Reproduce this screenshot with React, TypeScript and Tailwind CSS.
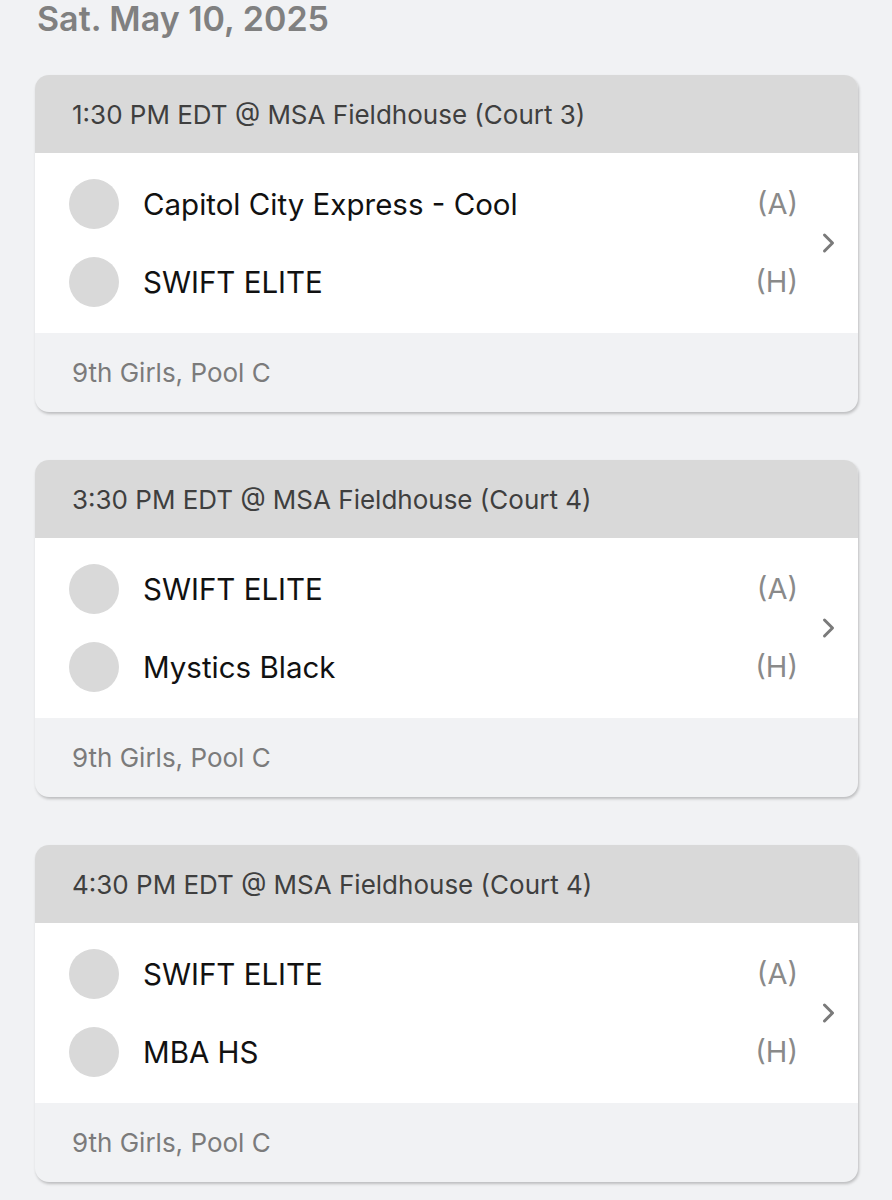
const games = [
  {
    time: '1:30 PM EDT @ MSA Fieldhouse (Court 3)',
    away: 'Capitol City Express - Cool',
    home: 'SWIFT ELITE',
    division: '9th Girls, Pool C',
  },
  {
    time: '3:30 PM EDT @ MSA Fieldhouse (Court 4)',
    away: 'SWIFT ELITE',
    home: 'Mystics Black',
    division: '9th Girls, Pool C',
  },
  {
    time: '4:30 PM EDT @ MSA Fieldhouse (Court 4)',
    away: 'SWIFT ELITE',
    home: 'MBA HS',
    division: '9th Girls, Pool C',
  },
];

function TeamRow({ name, side }: { name: string; side: string }) {
  return (
    <div className="flex items-center h-[78px]">
      <div className="w-[50px] h-[50px] rounded-full bg-[#d9d9d9] shrink-0" />
      <div className="ml-[24px] flex-1 text-[29.5px] text-[#111]">{name}</div>
      <div className="text-[29px] text-[#8a8a8a]">{side}</div>
    </div>
  );
}

export default function App() {
  return (
    <div
      className="min-h-[1200px] bg-[#f1f2f4] px-[35px] pb-10"
      style={{ fontFamily: 'Inter, "Noto Sans", sans-serif' }}
    >
      <h1 className="text-[34px] font-semibold text-[#808080] leading-none pt-[2px] pl-[2px] h-[75px]">
        Sat. May 10, 2025
      </h1>
      <div className="flex flex-col gap-[48px] w-[823px]">
        {games.map((g, i) => (
          <div
            key={i}
            className="rounded-[14px] overflow-hidden bg-[#f1f2f4] shadow-[1px_2px_3px_rgba(0,0,0,0.22)]"
          >
            <div className="h-[78px] bg-[#d9d9d9] flex items-center px-[37px] text-[26px] text-[#3f3f3f]">
              {g.time}
            </div>
            <div className="h-[180px] bg-white flex items-center pl-[34px] pr-[21px] py-[12px]">
              <div className="flex-1 flex flex-col">
                <TeamRow name={g.away} side="(A)" />
                <TeamRow name={g.home} side="(H)" />
              </div>
              <svg
                width="16"
                height="24"
                viewBox="0 0 16 24"
                className="ml-[23px] shrink-0"
              >
                <path
                  d="M3.5 4 L11.5 12 L3.5 20"
                  fill="none"
                  stroke="#7a7a7a"
                  strokeWidth="3"
                  strokeLinecap="round"
                  strokeLinejoin="round"
                />
              </svg>
            </div>
            <div className="h-[79px] flex items-center px-[37px] text-[26px] text-[#7b7b7b]">
              {g.division}
            </div>
          </div>
        ))}
      </div>
    </div>
  );
}
